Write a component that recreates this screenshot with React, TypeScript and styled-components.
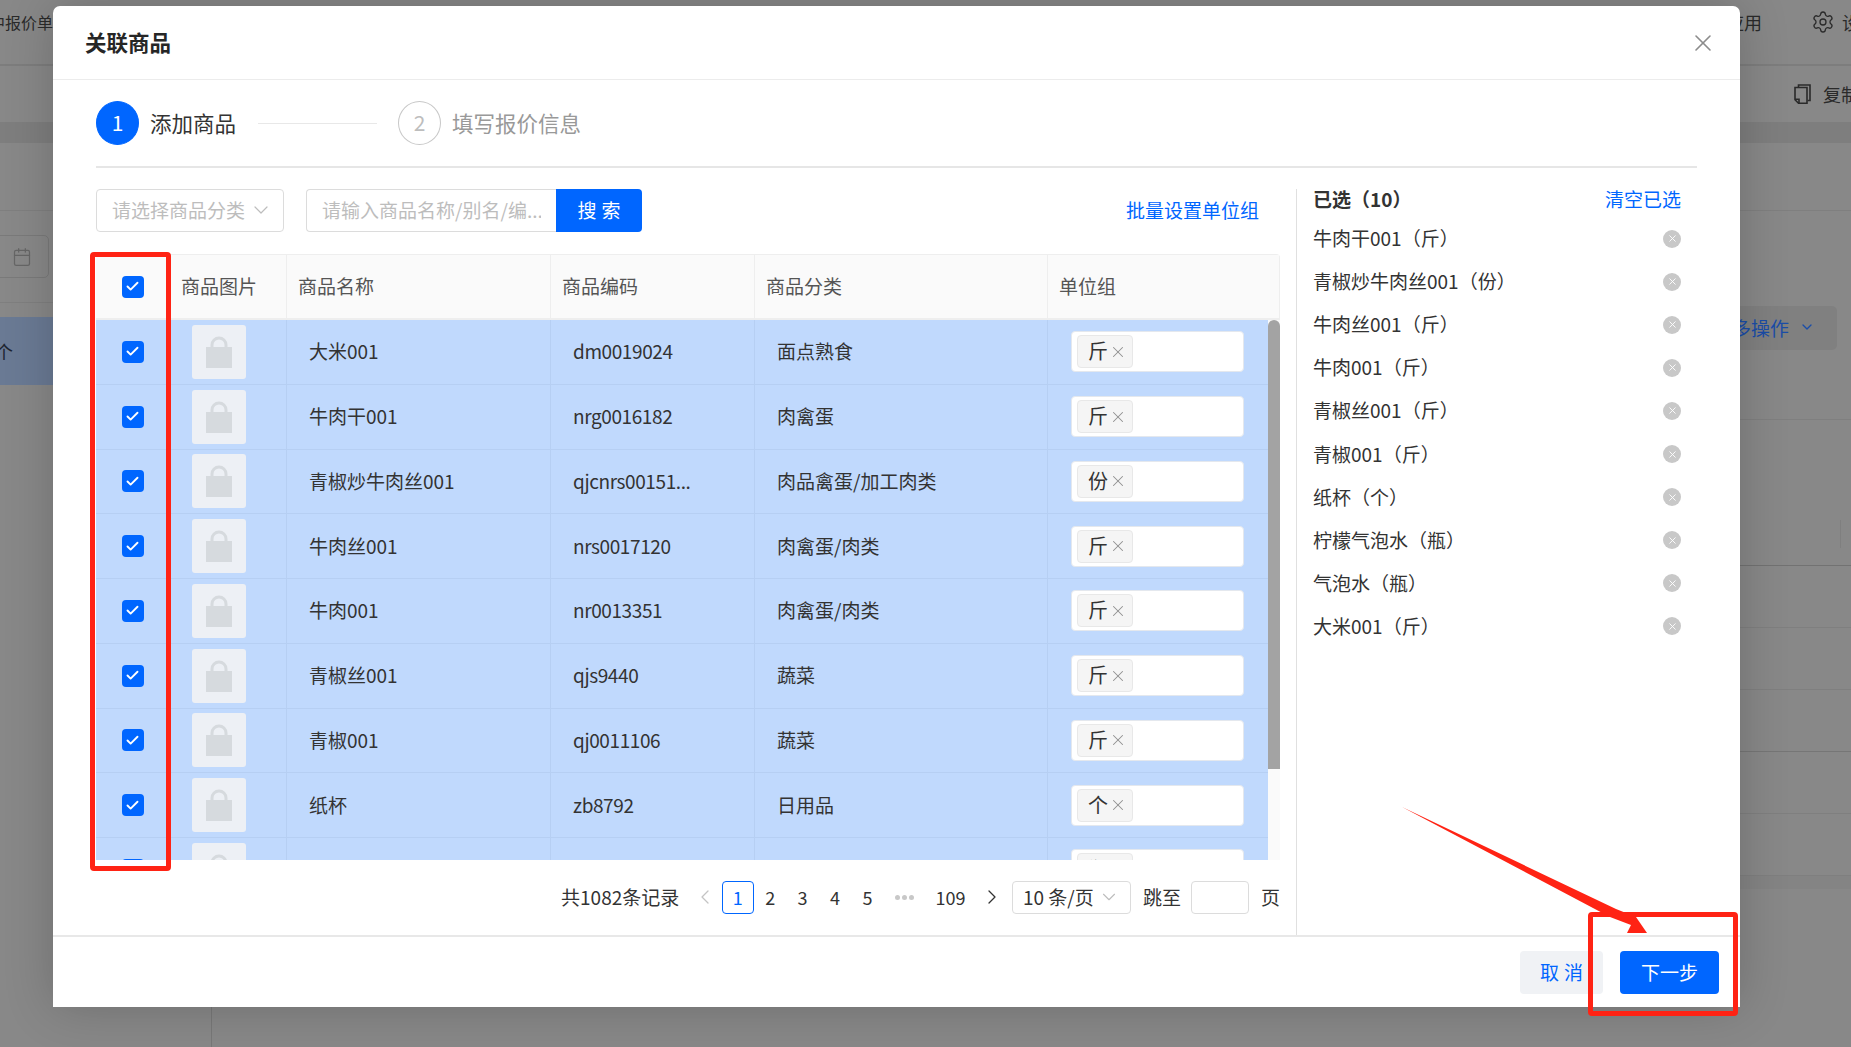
import React from 'react';
import styled, {createGlobalStyle} from 'styled-components';
import {Calendar, Check, ChevronDown, ChevronLeft, ChevronRight, Settings, X} from 'lucide-react';

const blue = '#0066ff';

const GlobalStyle = createGlobalStyle`
	* {
		box-sizing: border-box;
	}
	html,
	body {
		margin: 0;
		overflow: hidden;
		background: #888;
	}
	body {
		font-family: 'Noto Sans CJK SC', 'Noto Sans', sans-serif;
		color: #333;
	}
`;

const Page = styled.div`
	position: relative;
	display: flex;
	flex-direction: column;
	width: 1851px;
	height: 1047px;
	overflow: hidden;
	background: #888;
	color: #2a2a2a;
	font-size: 18px;
`;

/* page behind the mask */
const TopBar = styled.div`
	display: flex;
	align-items: center;
	height: 66px;
	margin-right: -27px;
	border-bottom: 2px solid #7d7d7d;
	padding-bottom: 20px;
`;

const TopLeftText = styled.span`
	margin-left: -11px;
	font-size: 16px;
	line-height: 20px;
`;

const TopAction = styled.span`
	display: flex;
	align-items: center;
	gap: 7px;
`;

const TopApply = styled(TopAction)`
	margin-left: auto;
	margin-right: 49px;
`;

const ToolRow = styled.div`
	display: flex;
	justify-content: flex-end;
	align-items: center;
	gap: 12px;
	height: 56px;
	margin-right: -8px;
`;

const Band = styled.div`
	height: 21px;
	flex: none;
	background: #7e7e7e;
`;

const Body = styled.div`
	display: flex;
	flex: 1;
`;

const Sidebar = styled.div`
	width: 212px;
	flex: none;
	border-right: 1px solid #787878;
`;

const SideBlock = styled.div`
	height: 68px;
	border-bottom: 1px solid #7f7f7f;
`;

const DateRow = styled.div`
	height: 92px;
	padding-top: 24px;
	border-bottom: 1px solid #7f7f7f;
`;

const DateInput = styled.div`
	display: flex;
	align-items: center;
	justify-content: flex-end;
	width: 149px;
	height: 43px;
	margin-left: -100px;
	padding-right: 16px;
	border: 1px solid #7a7a7a;
	border-radius: 5px;
	color: #666;
`;

const SideActive = styled.div`
	display: flex;
	align-items: center;
	height: 68px;
	margin-top: 14px;
	background: #6a7a94;
	color: #1d2430;
`;

const SideActiveText = styled.span`
	margin-left: -5px;
`;

const Main = styled.div`
	display: flex;
	flex-direction: column;
	flex: 1;
`;

const MainRow = styled.div<{$h: number; $line?: string}>`
	display: flex;
	justify-content: flex-end;
	height: ${p => p.$h}px;
	flex: none;
	border-bottom: 1px solid ${p => p.$line || '#7f7f7f'};
`;

const MoreButton = styled.div`
	display: flex;
	align-items: center;
	gap: 10px;
	height: 44px;
	margin: 95px 14px 0 0;
	padding: 0 22px 2px 0;
	border-radius: 5px;
	background: #808080;
	color: #1a4da8;
	font-size: 19px;
`;

const RowMark = styled.div`
	width: 1px;
	height: 28px;
	margin: 100px 10px 0 0;
	background: #7f7f7f;
`;

const BottomBand = styled.div`
	height: 13px;
	flex: none;
	background: #848484;
`;

/* modal */
const Modal = styled.div`
	position: absolute;
	left: 53px;
	top: 6px;
	display: flex;
	flex-direction: column;
	width: 1687px;
	height: 1001px;
	border-radius: 7px 7px 0 0;
	background: #fff;
	box-shadow: 0 0 50px rgba(0, 0, 0, 0.2);
	color: #333;
	font-size: 19px;
`;

const ModalHeader = styled.div`
	display: flex;
	align-items: center;
	justify-content: space-between;
	height: 74px;
	flex: none;
	padding: 0 23px 0 32px;
	border-bottom: 1px solid #ececec;
`;

const ModalTitle = styled.div`
	padding-bottom: 2px;
	font-size: 21.5px;
	font-weight: 700;
	color: #262626;
`;

const CloseIcon = styled(X)`
	color: #8c8c8c;
`;

const Steps = styled.div`
	display: flex;
	align-items: center;
	flex: none;
	height: 88px;
	margin: 0 43px;
	border-bottom: 2px solid #e6e6e6;
`;

const StepCircle = styled.div<{$active?: boolean}>`
	display: flex;
	align-items: center;
	justify-content: center;
	width: 43px;
	height: 44px;
	padding-bottom: 2px;
	border-radius: 50%;
	border: 1px solid ${p => (p.$active ? blue : '#c8c8c8')};
	background: ${p => (p.$active ? blue : '#fff')};
	color: ${p => (p.$active ? '#fff' : '#bdbdbd')};
	font-size: 21px;
`;

const StepLabel = styled.div<{$active?: boolean}>`
	margin-left: ${p => (p.$active ? 11 : 11)}px;
	padding-bottom: 2px;
	font-size: 21.5px;
	color: ${p => (p.$active ? '#333' : '#999')};
`;

const StepLine = styled.div`
	width: 119px;
	height: 1px;
	margin: 0 21px 0 22px;
	background: #e8e8e8;
`;

const Content = styled.div`
	display: flex;
	flex: 1;
	min-height: 0;
	margin-left: 43px;
	padding-top: 21px;
	padding-right: 59px;
`;

const LeftColumn = styled.div`
	display: flex;
	flex-direction: column;
	width: 1200px;
	flex: none;
	padding-right: 16px;
`;

const FilterRow = styled.div`
	display: flex;
	align-items: center;
	height: 43px;
	flex: none;
`;

const CategorySelect = styled.div`
	display: flex;
	align-items: center;
	justify-content: space-between;
	width: 188px;
	height: 43px;
	padding: 0 10px 2px 15px;
	border: 1px solid #dcdcdc;
	border-radius: 4px;
	color: #bdbdbd;
	white-space: nowrap;
`;

const SearchInput = styled.input`
	width: 250px;
	height: 43px;
	margin-left: 22px;
	padding: 0 15px 2px;
	border: 1px solid #dcdcdc;
	border-right: none;
	border-radius: 4px 0 0 4px;
	outline: none;
	font: inherit;
	&::placeholder {
		color: #bdbdbd;
	}
`;

const SearchButton = styled.div`
	display: flex;
	align-items: center;
	justify-content: center;
	width: 86px;
	height: 43px;
	padding-bottom: 2px;
	border-radius: 0 4px 4px 0;
	background: ${blue};
	color: #fff;
	letter-spacing: 5px;
	text-indent: 5px;
`;

const BatchLink = styled.div`
	margin-left: auto;
	padding: 0 21px 2px 0;
	color: ${blue};
`;

const Table = styled.div`
	display: flex;
	flex-direction: column;
	height: 606px;
	flex: none;
	margin-top: 22px;
	overflow: hidden;
	border-radius: 4px 4px 0 0;
`;

const HeaderRow = styled.div`
	display: grid;
	grid-template-columns: 74px 117px 264px 204px 293px 232px;
	height: 66px;
	flex: none;
	border: 1px solid #eee;
	border-width: 1px 1px 2px 0;
	background: #fafafa;
	color: #555;
`;

const HeaderCell = styled.div`
	display: flex;
	align-items: center;
	padding: 0 0 2px 11px;
	border-right: 1px solid #eee;
	&:last-child {
		border-right: none;
	}
`;

const CheckCell = styled.div`
	display: flex;
	align-items: center;
	justify-content: center;
	border-right: 1px solid #eee;
`;

const TableBody = styled.div`
	display: flex;
	flex: 1;
	min-height: 0;
`;

const Rows = styled.div`
	flex: 1;
	overflow: hidden;
`;

const Row = styled.div`
	display: grid;
	grid-template-columns: 74px 117px 264px 204px 293px 220px;
	height: 64.75px;
	border-bottom: 1px solid #b6cff3;
	background: #c0d9fd;
`;

const BodyCell = styled.div`
	display: flex;
	align-items: center;
	padding-left: 22px;
	border-right: 1px solid #b6cff3;
	white-space: nowrap;
	&:last-child {
		border-right: none;
	}
`;

const TextCell = styled(BodyCell)`
	padding-bottom: 2px;
`;

const CodeCell = styled(TextCell)`
	letter-spacing: -0.4px;
`;

const BodyCheckCell = styled(CheckCell)`
	border-right-color: #b6cff3;
`;

const ScrollTrack = styled.div`
	width: 12px;
	flex: none;
	background: #fafafa;
`;

const ScrollThumb = styled.div`
	height: 449px;
	border-radius: 6px 6px 0 0;
	background: #a3a3a3;
`;

const CheckBox = styled.div`
	display: flex;
	align-items: center;
	justify-content: center;
	width: 22px;
	height: 22px;
	border-radius: 4px;
	background: ${blue};
	color: #fff;
`;

const Thumb = styled.div`
	display: flex;
	align-items: center;
	justify-content: center;
	width: 54px;
	height: 54px;
	border-radius: 3px;
	background: #edf0f5;
`;

const UnitBox = styled.div`
	display: flex;
	align-items: center;
	width: 173px;
	height: 41px;
	margin-left: 1px;
	padding-left: 5px;
	border: 1px solid #e4e8ee;
	border-radius: 4px;
	background: #fff;
`;

const UnitTag = styled.div`
	display: flex;
	align-items: center;
	justify-content: space-between;
	width: 56px;
	height: 33px;
	padding: 0 5px 2px 10px;
	border: 1px solid #e8e8e8;
	border-radius: 4px;
	background: #f5f5f5;
	font-size: 20px;
`;

const TagClose = styled(X)`
	margin-top: 2px;
	color: #909090;
`;

const Pagination = styled.div`
	display: flex;
	align-items: center;
	justify-content: flex-end;
	height: 33px;
	flex: none;
	margin-top: 21px;
	white-space: nowrap;
`;

const Total = styled.span`
	margin-right: 10px;
	padding-bottom: 2px;
`;

const PageItem = styled.div<{$w?: number; $current?: boolean; $muted?: boolean}>`
	display: flex;
	align-items: center;
	justify-content: center;
	width: ${p => p.$w || 32.4}px;
	height: 33px;
	padding-bottom: 2px;
	border: 1px solid ${p => (p.$current ? blue : 'transparent')};
	border-radius: 4px;
	color: ${p => (p.$current ? blue : p.$muted ? '#c4c4c4' : '#333')};
	font-size: 18px;
`;

const Ellipsis = styled.div`
	display: flex;
	align-items: center;
	justify-content: center;
	gap: 2px;
	width: 42px;
`;

const EllipsisDot = styled.span`
	width: 5px;
	height: 5px;
	border-radius: 50%;
	background: #c8c8c8;
`;

const SizeSelect = styled.div`
	display: flex;
	align-items: center;
	justify-content: space-between;
	width: 119px;
	height: 33px;
	margin-left: 4px;
	padding: 0 10px 2px 10px;
	border: 1px solid #dcdcdc;
	border-radius: 4px;
`;

const SizeArrow = styled(ChevronDown)`
	color: #bdbdbd;
`;

const JumpLabel = styled.span`
	margin-left: 12px;
	padding-bottom: 2px;
`;

const JumpInput = styled.div`
	width: 58px;
	height: 33px;
	margin: 0 12px 0 10px;
	border: 1px solid #dcdcdc;
	border-radius: 4px;
`;

const JumpUnit = styled.span`
	padding-bottom: 2px;
`;

const RightColumn = styled.div`
	display: flex;
	flex-direction: column;
	flex: 1;
	padding-left: 16px;
	border-left: 1px solid #e0e0e0;
`;

const SelectedHead = styled.div`
	display: flex;
	align-items: center;
	justify-content: space-between;
	height: 20px;
	margin-bottom: 8px;
	padding-bottom: 2px;
`;

const SelectedTitle = styled.span`
	font-weight: 700;
	color: #333;
`;

const ClearLink = styled.span`
	color: ${blue};
`;

const SelectedRow = styled.div`
	display: flex;
	align-items: center;
	justify-content: space-between;
	height: 43.1px;
	flex: none;
`;

const SelectedName = styled.span`
	padding-bottom: 2px;
`;

const RemoveDot = styled.div`
	display: flex;
	align-items: center;
	justify-content: center;
	width: 18px;
	height: 18px;
	border-radius: 50%;
	background: #c8c8c8;
	color: #fff;
`;

const ModalFooter = styled.div`
	display: flex;
	align-items: center;
	justify-content: flex-end;
	gap: 17px;
	height: 72px;
	flex: none;
	padding-right: 21px;
	border-top: 2px solid #e8e8e8;
`;

const CancelButton = styled.div`
	display: flex;
	align-items: center;
	justify-content: center;
	width: 83px;
	height: 43px;
	padding-bottom: 2px;
	border-radius: 4px;
	background: #f0f2f5;
	color: ${blue};
	letter-spacing: 5px;
	text-indent: 5px;
`;

const NextButton = styled.div`
	display: flex;
	align-items: center;
	justify-content: center;
	width: 99px;
	height: 43px;
	padding-bottom: 2px;
	border-radius: 4px;
	background: ${blue};
	color: #fff;
`;

/* red marks drawn on top of the screenshot */
const RedMark = styled.div`
	position: absolute;
	border: 5px solid #ff2314;
	border-radius: 4px;
`;

const ColumnMark = styled(RedMark)`
	left: 90px;
	top: 252px;
	width: 81px;
	height: 619px;
`;

const ButtonMark = styled(RedMark)`
	left: 1588px;
	top: 912px;
	width: 150px;
	height: 104px;
`;

const ArrowLayer = styled.svg`
	position: absolute;
	left: 0;
	top: 0;
	pointer-events: none;
`;

const products = [
	{name: '大米001', code: 'dm0019024', category: '面点熟食', unit: '斤'},
	{name: '牛肉干001', code: 'nrg0016182', category: '肉禽蛋', unit: '斤'},
	{name: '青椒炒牛肉丝001', code: 'qjcnrs00151...', category: '肉品禽蛋/加工肉类', unit: '份'},
	{name: '牛肉丝001', code: 'nrs0017120', category: '肉禽蛋/肉类', unit: '斤'},
	{name: '牛肉001', code: 'nr0013351', category: '肉禽蛋/肉类', unit: '斤'},
	{name: '青椒丝001', code: 'qjs9440', category: '蔬菜', unit: '斤'},
	{name: '青椒001', code: 'qj0011106', category: '蔬菜', unit: '斤'},
	{name: '纸杯', code: 'zb8792', category: '日用品', unit: '个'},
	{name: '柠檬气泡水', code: 'nmqps8801', category: '饮料', unit: '瓶'},
];

const selected = [
	'牛肉干001（斤）',
	'青椒炒牛肉丝001（份）',
	'牛肉丝001（斤）',
	'牛肉001（斤）',
	'青椒丝001（斤）',
	'青椒001（斤）',
	'纸杯（个）',
	'柠檬气泡水（瓶）',
	'气泡水（瓶）',
	'大米001（斤）',
];

const LockIcon = () => (
	<svg width="26" height="32" viewBox="0 0 26 32">
		<path d="M6 13V9a7 7 0 0 1 14 0v4" fill="none" stroke="#d6dade" strokeWidth="3" />
		<rect x="0" y="11" width="26" height="21" fill="#d6dade" />
	</svg>
);

const CopySheetIcon = () => (
	<svg width="17" height="20" viewBox="0 0 17 20" fill="none" stroke="#2a2a2a" strokeWidth="1.6">
		<path d="M4.5 3V1h11.5v15.5h-2.5" />
		<path d="M1 3.5h12v15.7H4.5L1 15.7z" />
		<path d="M1 15.2h4v4" />
	</svg>
);

const Tick = () => (
	<CheckBox>
		<Check size={15} strokeWidth={3} />
	</CheckBox>
);

const BackgroundPage = () => (
	<>
		<TopBar>
			<TopLeftText>中报价单</TopLeftText>
			<TopApply>应用</TopApply>
			<TopAction>
				<Settings size={24} strokeWidth={1.3} />
				设置
			</TopAction>
		</TopBar>
		<ToolRow>
			<CopySheetIcon />
			复制
		</ToolRow>
		<Band />
		<Body>
			<Sidebar>
				<SideBlock />
				<DateRow>
					<DateInput>
						<Calendar size={20} strokeWidth={1.5} />
					</DateInput>
				</DateRow>
				<SideActive>
					<SideActiveText>个</SideActiveText>
				</SideActive>
			</Sidebar>
			<Main>
				<MainRow $h={68} />
				<MainRow $h={209}>
					<MoreButton>
						更多操作
						<ChevronDown size={16} />
					</MoreButton>
				</MainRow>
				<MainRow $h={146} $line="#727272">
					<RowMark />
				</MainRow>
				<MainRow $h={62} />
				<MainRow $h={62} />
				<MainRow $h={62} $line="#767676" />
				<MainRow $h={62} />
				<MainRow $h={62} />
				<BottomBand />
			</Main>
		</Body>
	</>
);

export default function App() {
	return (
		<Page>
			<GlobalStyle />
			<BackgroundPage />
			<Modal>
				<ModalHeader>
					<ModalTitle>关联商品</ModalTitle>
					<CloseIcon size={28} strokeWidth={1.4} />
				</ModalHeader>
				<Steps>
					<StepCircle $active>1</StepCircle>
					<StepLabel $active>添加商品</StepLabel>
					<StepLine />
					<StepCircle>2</StepCircle>
					<StepLabel>填写报价信息</StepLabel>
				</Steps>
				<Content>
					<LeftColumn>
						<FilterRow>
							<CategorySelect>
								请选择商品分类
								<ChevronDown size={24} strokeWidth={1.2} />
							</CategorySelect>
							<SearchInput placeholder="请输入商品名称/别名/编..." />
							<SearchButton>搜索</SearchButton>
							<BatchLink>批量设置单位组</BatchLink>
						</FilterRow>
						<Table>
							<HeaderRow>
								<CheckCell>
									<Tick />
								</CheckCell>
								<HeaderCell>商品图片</HeaderCell>
								<HeaderCell>商品名称</HeaderCell>
								<HeaderCell>商品编码</HeaderCell>
								<HeaderCell>商品分类</HeaderCell>
								<HeaderCell>单位组</HeaderCell>
							</HeaderRow>
							<TableBody>
								<Rows>
									{products.map(item => (
										<Row key={item.name}>
											<BodyCheckCell>
												<Tick />
											</BodyCheckCell>
											<BodyCell>
												<Thumb>
													<LockIcon />
												</Thumb>
											</BodyCell>
											<TextCell>{item.name}</TextCell>
											<CodeCell>{item.code}</CodeCell>
											<TextCell>{item.category}</TextCell>
											<BodyCell>
												<UnitBox>
													<UnitTag>
														{item.unit}
														<TagClose size={18} strokeWidth={1.4} />
													</UnitTag>
												</UnitBox>
											</BodyCell>
										</Row>
									))}
								</Rows>
								<ScrollTrack>
									<ScrollThumb />
								</ScrollTrack>
							</TableBody>
						</Table>
						<Pagination>
							<Total>共1082条记录</Total>
							<PageItem $muted>
								<ChevronLeft size={24} strokeWidth={1.3} />
							</PageItem>
							<PageItem $current>1</PageItem>
							<PageItem>2</PageItem>
							<PageItem>3</PageItem>
							<PageItem>4</PageItem>
							<PageItem>5</PageItem>
							<Ellipsis>
								<EllipsisDot />
								<EllipsisDot />
								<EllipsisDot />
							</Ellipsis>
							<PageItem $w={50}>109</PageItem>
							<PageItem>
								<ChevronRight size={24} strokeWidth={1.3} />
							</PageItem>
							<SizeSelect>
								10 条/页
								<SizeArrow size={22} strokeWidth={1.2} />
							</SizeSelect>
							<JumpLabel>跳至</JumpLabel>
							<JumpInput />
							<JumpUnit>页</JumpUnit>
						</Pagination>
					</LeftColumn>
					<RightColumn>
						<SelectedHead>
							<SelectedTitle>已选（10）</SelectedTitle>
							<ClearLink>清空已选</ClearLink>
						</SelectedHead>
						{selected.map(name => (
							<SelectedRow key={name}>
								<SelectedName>{name}</SelectedName>
								<RemoveDot>
									<X size={11} strokeWidth={2} />
								</RemoveDot>
							</SelectedRow>
						))}
					</RightColumn>
				</Content>
				<ModalFooter>
					<CancelButton>取消</CancelButton>
					<NextButton>下一步</NextButton>
				</ModalFooter>
			</Modal>
			<ColumnMark />
			<ButtonMark />
			<ArrowLayer width="1851" height="1047" viewBox="0 0 1851 1047">
				<polygon
					points="1402,807 1616,909 1636,917 1647,933 1627,933 1631,925 1610,917"
					fill="#ff2314"
				/>
			</ArrowLayer>
		</Page>
	);
}
